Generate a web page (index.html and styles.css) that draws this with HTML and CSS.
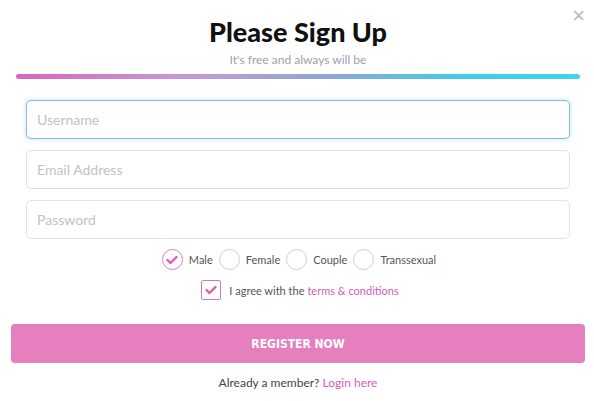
FILE: index.html
```html
<!DOCTYPE html>
<html lang="en">
<head>
    <meta charset="UTF-8">
    <meta name="viewport" content="width=device-width, initial-scale=1.0">
    <title>Please Sign Up</title>
    <link rel="stylesheet" href="styles.css">
</head>
<body>
    <div class="modal">
        <span class="close">&times;</span>
        <h1>Please Sign Up</h1>
        <p class="subtitle">It's free and always will be</p>
        <div class="divider"></div>
        <div class="fields">
            <input type="text" class="field focused" placeholder="Username">
            <input type="email" class="field" placeholder="Email Address">
            <input type="password" class="field" placeholder="Password">
        </div>
        <div class="genders">
            <label class="gender"><span class="radio checked">
                <svg width="12" height="10" viewBox="0 0 12 10"><path d="M1.5 5 L4.5 8 L10.5 2" fill="none" stroke="#e05cb0" stroke-width="2.4" stroke-linecap="round" stroke-linejoin="round"/></svg>
            </span>Male</label>
            <label class="gender"><span class="radio"></span>Female</label>
            <label class="gender"><span class="radio"></span>Couple</label>
            <label class="gender"><span class="radio"></span>Transsexual</label>
        </div>
        <div class="agree">
            <span class="checkbox">
                <svg width="12" height="10" viewBox="0 0 12 10"><path d="M1.5 5 L4.5 8 L10.5 2" fill="none" stroke="#e05cb0" stroke-width="2.4" stroke-linecap="round" stroke-linejoin="round"/></svg>
            </span>
            I agree with the <a href="#">terms &amp; conditions</a>
        </div>
        <button class="register">REGISTER NOW</button>
        <p class="footer">Already a member? <a href="#">Login here</a></p>
    </div>
</body>
</html>
```

FILE: styles.css
```css
body {
    margin: 0;
    padding: 0;
    background: #fff;
    font-family: Lato, "Open Sans", sans-serif;
}
.modal {
    position: relative;
    width: 594px;
    height: 401px;
    padding: 0 9px 0 11px;
    box-sizing: border-box;
}
.close {
    position: absolute;
    top: 3px;
    right: 9px;
    font-size: 22px;
    color: #b8b8b8;
    font-family: Arial, sans-serif;
}
h1 {
    margin: 0;
    padding-top: 15px;
    text-align: center;
    font-size: 27px;
    line-height: 34px;
    font-weight: 900;
    color: #111;
}
.subtitle {
    margin: 4px 0 0;
    text-align: center;
    font-size: 12px;
    line-height: 14px;
    color: #9ba3ad;
}
.divider {
    margin: 7px 5px 0 5px;
    height: 5px;
    border-radius: 3px;
    background: linear-gradient(to right, #d865c0 0%, #c49bd4 30%, #8fa6d6 55%, #3fcde8 80%, #3dd6ec 100%);
}
.fields {
    display: flex;
    flex-direction: column;
    gap: 11px;
    padding: 21px 15px 0;
}
.field {
    box-sizing: border-box;
    height: 39px;
    border: 1px solid #e2e2e2;
    border-radius: 5px;
    padding: 0 10px;
    font-family: Lato, sans-serif;
    font-size: 14px;
    color: #333;
    outline: none;
}
.field::placeholder {
    color: #bfc3c7;
}
.field.focused {
    border-color: #84bcd6;
    box-shadow: 0 0 5px rgba(120, 190, 225, 0.45);
}
.genders {
    display: flex;
    justify-content: center;
    align-items: center;
    gap: 6px;
    margin-top: 10px;
    margin-left: 2px;
    font-size: 11px;
    color: #555;
}
.gender {
    display: flex;
    align-items: center;
    gap: 6px;
}
.radio {
    width: 19px;
    height: 19px;
    border: 1px solid #cfcfcf;
    border-radius: 50%;
    display: flex;
    align-items: center;
    justify-content: center;
}
.radio.checked {
    border-color: #e07cc0;
}
.agree {
    display: flex;
    justify-content: center;
    align-items: center;
    gap: 8px;
    margin-top: 10px;
    margin-left: 4px;
    font-size: 11px;
    color: #555;
}
.agree a, .footer a {
    color: #d45cb9;
    text-decoration: none;
}
.agree a {
    margin-left: -5px;
}
.checkbox {
    width: 18px;
    height: 18px;
    border: 1px solid #d877bd;
    border-radius: 2px;
    display: flex;
    align-items: center;
    justify-content: center;
}
.register {
    display: block;
    width: 574px;
    height: 39px;
    margin-top: 24px;
    border: none;
    border-radius: 4px;
    background: #e57fbe;
    color: #fff;
    font-family: "DejaVu Sans Condensed", "Open Sans", sans-serif;
    font-stretch: condensed;
    font-size: 12px;
    font-weight: bold;
}
.footer {
    margin: 12px 0 0;
    text-align: center;
    font-size: 12px;
    color: #444;
}
```
